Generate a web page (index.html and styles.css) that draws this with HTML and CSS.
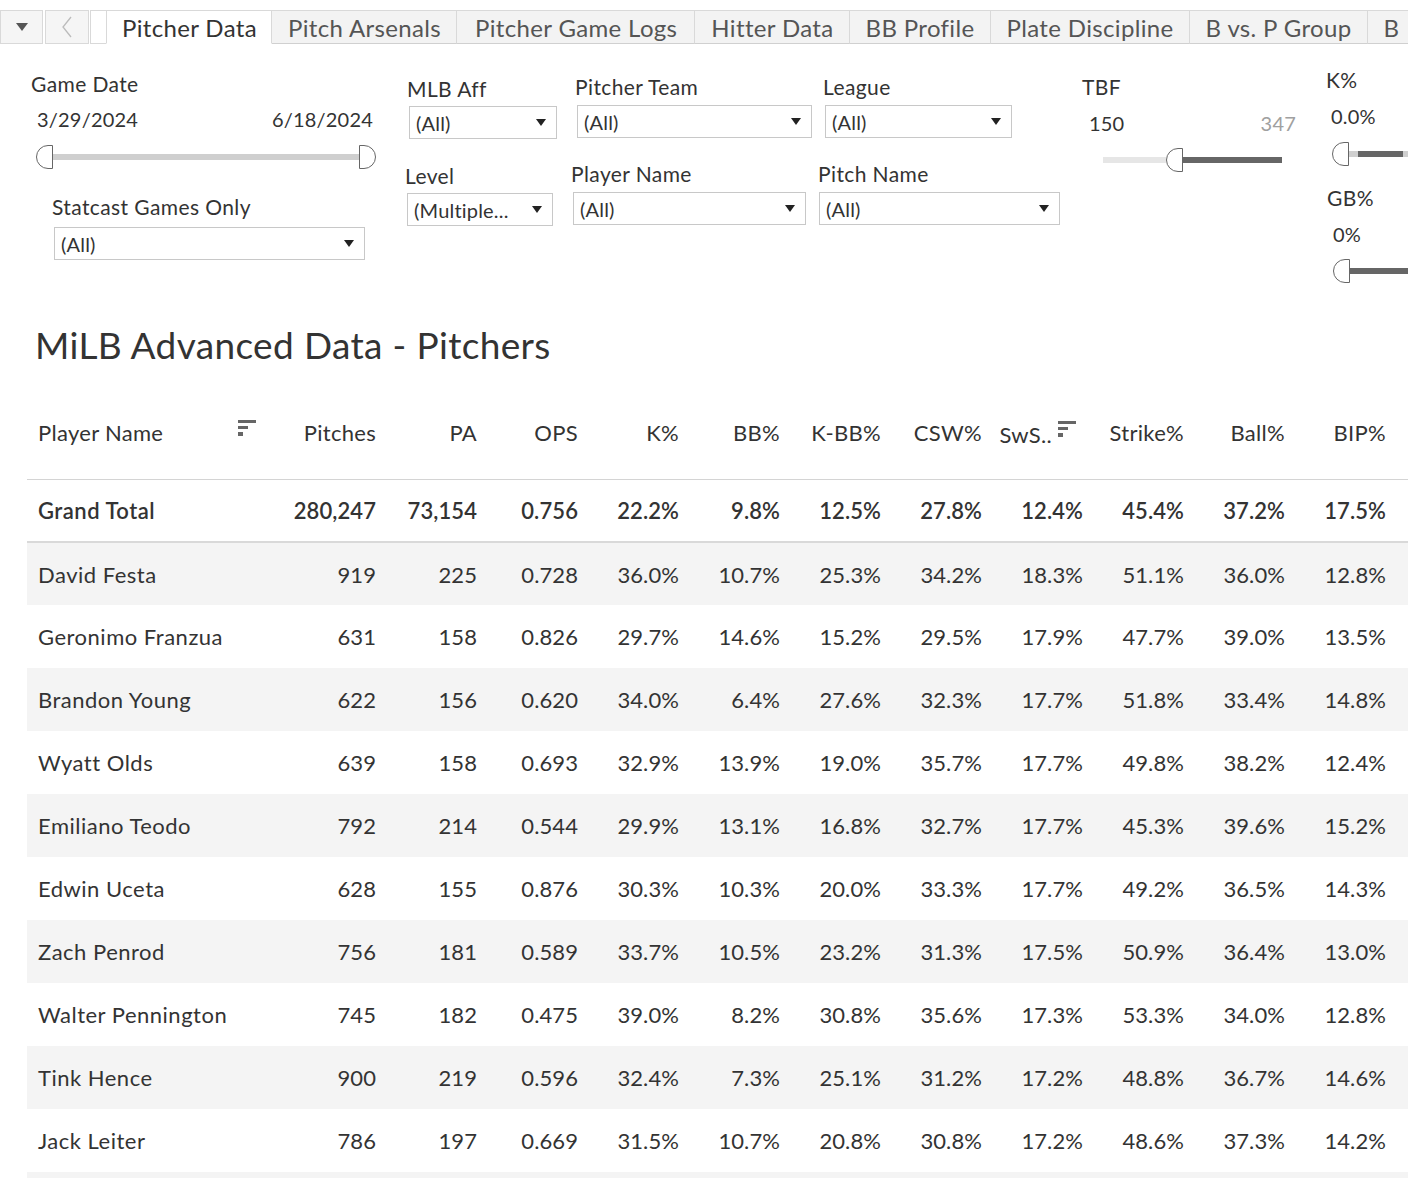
FILE: index.html
```html
<!DOCTYPE html>
<html>
<head>
<meta charset="utf-8">
<link rel="stylesheet" href="styles.css">
</head>
<body>
<div class="tabbar">
  <div class="tbtn menu"><svg width="12" height="8" viewBox="0 0 12 8"><path d="M0 0H12L6 8Z" fill="#555"/></svg></div>
  <div class="tbtn back"><svg width="12" height="22" viewBox="0 0 12 22"><path d="M10 1L2 11L10 21" fill="none" stroke="#bbb" stroke-width="1.3"/></svg></div>
  <div class="tgap"></div>
  <div class="tab active">Pitcher Data</div>
  <div class="tab">Pitch Arsenals</div>
  <div class="tab wide">Pitcher Game Logs</div>
  <div class="tab">Hitter Data</div>
  <div class="tab">BB Profile</div>
  <div class="tab">Plate Discipline</div>
  <div class="tab">B vs. P Group</div>
  <div class="tab last">B</div>
</div>

<div class="filters">
  <div class="col col-a">
    <div class="label">Game Date</div>
    <div class="range"><span>3/29/2024</span><span>6/18/2024</span></div>
    <div class="slider date-slider">
      <div class="handle hl"></div>
      <div class="track light"></div>
      <div class="handle hr"></div>
    </div>
    <div class="label statcast-label">Statcast Games Only</div>
    <div class="dd statcast-dd"><span>(All)</span><i class="arrow"></i></div>
  </div>
  <div class="col col-b">
    <div class="label mlb-label">MLB Aff</div>
    <div class="dd mlb-dd"><span>(All)</span><i class="arrow"></i></div>
    <div class="label level-label">Level</div>
    <div class="dd level-dd"><span>(Multiple...</span><i class="arrow"></i></div>
  </div>
  <div class="col col-c">
    <div class="label team-label">Pitcher Team</div>
    <div class="dd team-dd"><span>(All)</span><i class="arrow"></i></div>
    <div class="label player-label">Player Name</div>
    <div class="dd player-dd"><span>(All)</span><i class="arrow"></i></div>
  </div>
  <div class="col col-d">
    <div class="label league-label">League</div>
    <div class="dd league-dd"><span>(All)</span><i class="arrow"></i></div>
    <div class="label pitch-label">Pitch Name</div>
    <div class="dd pitch-dd"><span>(All)</span><i class="arrow"></i></div>
  </div>
  <div class="col col-e">
    <div class="label tbf-label">TBF</div>
    <div class="range tbf-range"><span>150</span><span class="muted">347</span></div>
    <div class="slider tbf-slider">
      <div class="track pale tbf-left"></div>
      <div class="handle hl"></div>
      <div class="track dark grow"></div>
    </div>
  </div>
  <div class="col col-f">
    <div class="label k-label">K%</div>
    <div class="val k-val">0.0%</div>
    <div class="slider k-slider">
      <div class="handle hl"></div>
      <div class="track light kseg1"></div>
      <div class="track dark kseg2"></div>
      <div class="track light grow"></div>
    </div>
    <div class="label gb-label">GB%</div>
    <div class="val gb-val">0%</div>
    <div class="slider gb-slider">
      <div class="handle hl"></div>
      <div class="track dark grow"></div>
    </div>
  </div>
</div>

<h1 class="title">MiLB Advanced Data - Pitchers</h1>

<div class="table-wrap">
<table class="data">
  <colgroup>
    <col class="c-name"><col class="c-num"><col class="c-num"><col class="c-num"><col class="c-num"><col class="c-num"><col class="c-num"><col class="c-num"><col class="c-num"><col class="c-num"><col class="c-num"><col class="c-num"><col class="c-extra">
  </colgroup>
  <thead>
    <tr>
      <th class="name-h"><div class="hflex"><span>Player Name</span><svg class="sort" width="18" height="16" viewBox="0 0 18 16"><rect x="0" y="0" width="18" height="3" fill="#666"/><rect x="0" y="6" width="10" height="3" fill="#666"/><rect x="0" y="12" width="5" height="4" fill="#666"/></svg></div></th>
      <th>Pitches</th><th>PA</th><th>OPS</th><th>K%</th><th>BB%</th><th>K-BB%</th><th>CSW%</th>
      <th class="sws-h"><span>SwS..</span><svg class="sort" width="18" height="16" viewBox="0 0 18 16"><rect x="0" y="0" width="18" height="3" fill="#666"/><rect x="0" y="6" width="10" height="3" fill="#666"/><rect x="0" y="12" width="5" height="4" fill="#666"/></svg></th>
      <th>Strike%</th><th>Ball%</th><th>BIP%</th><th></th>
    </tr>
  </thead>
  <tbody>
    <tr class="total"><td>Grand Total</td><td>280,247</td><td>73,154</td><td>0.756</td><td>22.2%</td><td>9.8%</td><td>12.5%</td><td>27.8%</td><td>12.4%</td><td>45.4%</td><td>37.2%</td><td>17.5%</td><td></td></tr>
    <tr class="alt"><td>David Festa</td><td>919</td><td>225</td><td>0.728</td><td>36.0%</td><td>10.7%</td><td>25.3%</td><td>34.2%</td><td>18.3%</td><td>51.1%</td><td>36.0%</td><td>12.8%</td><td></td></tr>
    <tr><td>Geronimo Franzua</td><td>631</td><td>158</td><td>0.826</td><td>29.7%</td><td>14.6%</td><td>15.2%</td><td>29.5%</td><td>17.9%</td><td>47.7%</td><td>39.0%</td><td>13.5%</td><td></td></tr>
    <tr class="alt"><td>Brandon Young</td><td>622</td><td>156</td><td>0.620</td><td>34.0%</td><td>6.4%</td><td>27.6%</td><td>32.3%</td><td>17.7%</td><td>51.8%</td><td>33.4%</td><td>14.8%</td><td></td></tr>
    <tr><td>Wyatt Olds</td><td>639</td><td>158</td><td>0.693</td><td>32.9%</td><td>13.9%</td><td>19.0%</td><td>35.7%</td><td>17.7%</td><td>49.8%</td><td>38.2%</td><td>12.4%</td><td></td></tr>
    <tr class="alt"><td>Emiliano Teodo</td><td>792</td><td>214</td><td>0.544</td><td>29.9%</td><td>13.1%</td><td>16.8%</td><td>32.7%</td><td>17.7%</td><td>45.3%</td><td>39.6%</td><td>15.2%</td><td></td></tr>
    <tr><td>Edwin Uceta</td><td>628</td><td>155</td><td>0.876</td><td>30.3%</td><td>10.3%</td><td>20.0%</td><td>33.3%</td><td>17.7%</td><td>49.2%</td><td>36.5%</td><td>14.3%</td><td></td></tr>
    <tr class="alt"><td>Zach Penrod</td><td>756</td><td>181</td><td>0.589</td><td>33.7%</td><td>10.5%</td><td>23.2%</td><td>31.3%</td><td>17.5%</td><td>50.9%</td><td>36.4%</td><td>13.0%</td><td></td></tr>
    <tr><td>Walter Pennington</td><td>745</td><td>182</td><td>0.475</td><td>39.0%</td><td>8.2%</td><td>30.8%</td><td>35.6%</td><td>17.3%</td><td>53.3%</td><td>34.0%</td><td>12.8%</td><td></td></tr>
    <tr class="alt"><td>Tink Hence</td><td>900</td><td>219</td><td>0.596</td><td>32.4%</td><td>7.3%</td><td>25.1%</td><td>31.2%</td><td>17.2%</td><td>48.8%</td><td>36.7%</td><td>14.6%</td><td></td></tr>
    <tr><td>Jack Leiter</td><td>786</td><td>197</td><td>0.669</td><td>31.5%</td><td>10.7%</td><td>20.8%</td><td>30.8%</td><td>17.2%</td><td>48.6%</td><td>37.3%</td><td>14.2%</td><td></td></tr>
    <tr class="alt"><td>&nbsp;</td><td></td><td></td><td></td><td></td><td></td><td></td><td></td><td></td><td></td><td></td><td></td><td></td></tr>
  </tbody>
</table>
</div>
</body>
</html>
```

FILE: styles.css
```css
* { box-sizing: border-box; }
html, body { margin: 0; padding: 0; background: #fff; }
body {
  width: 1408px;
  height: 1178px;
  overflow: hidden;
  font-family: Lato, "Open Sans", sans-serif;
  color: #333;
}

/* ---------- tab bar ---------- */
.tabbar {
  display: flex;
  margin-top: 10px;
  height: 34px;
  white-space: nowrap;
}
.tbtn {
  flex: none;
  height: 34px;
  background: #f5f5f5;
  border: 1px solid #d9d9d9;
  display: flex;
  align-items: center;
  justify-content: center;
}
.menu { width: 43px; margin-right: 2px; }
.back { width: 44px; margin-right: 1px; }
.tgap {
  flex: none;
  width: 16px;
  height: 34px;
  border: 1px solid #d9d9d9;
  border-right: none;
}
.tab {
  flex: none;
  height: 34px;
  padding: 0 15px 0 16px;
  display: flex;
  align-items: center;
  font-size: 24px;
  letter-spacing: 0.35px;
  color: #555;
  background: #f3f3f3;
  border-top: 1px solid #d9d9d9;
  border-bottom: 1px solid #d0d0d0;
  border-right: 1px solid #d9d9d9;
}
.tab.active {
  background: #fff;
  color: #333;
  border-left: 1px solid #d9d9d9;
  border-bottom: 1px solid #fff;
  padding: 0 14px 0 15px;
}
.tab.wide { padding: 0 17px 0 18px; }
.tab.last { padding-right: 30px; }

/* ---------- filters ---------- */
.filters {
  display: flex;
  align-items: flex-start;
  height: 256px;
}
.col { display: flex; flex-direction: column; flex: none; }
.label {
  font-size: 21px;
  line-height: 26px;
  letter-spacing: 0.4px;
  color: #333;
  white-space: nowrap;
}
.range, .val {
  font-size: 20px;
  line-height: 24px;
  color: #333;
  display: flex;
  justify-content: space-between;
  letter-spacing: 0.2px;
  white-space: nowrap;
}
.muted { color: #a0a0a0; }

.slider { display: flex; align-items: center; height: 24px; }
.handle {
  width: 17px;
  height: 24px;
  background: #fff;
  border: 1px solid #666;
  flex: none;
}
.hl { border-radius: 12px 0 0 12px; }
.hr { border-radius: 0 12px 12px 0; }
.track { height: 6px; }
.track.light { background: #cfcfcf; }
.track.pale { background: #e6e6e6; }
.track.dark { background: #666; }
.grow { flex: 1; }

.dd {
  height: 33px;
  border: 1px solid #c8c8c8;
  display: flex;
  align-items: center;
  justify-content: space-between;
  padding: 0 10px 0 6px;
  font-size: 20px;
  color: #333;
  letter-spacing: 0.2px;
  background: #fff;
  white-space: nowrap;
}
.arrow {
  width: 0; height: 0;
  border-left: 5px solid transparent;
  border-right: 5px solid transparent;
  border-top: 7px solid #222;
}

/* column A */
.col-a { width: 376px; padding-left: 31px; padding-top: 27px; }
.col-a .range { padding: 10px 3px 0 6px; }
.date-slider { margin-top: 14px; margin-left: 5px; }
.date-slider .track { flex: 1; }
.statcast-label { margin-top: 25px; margin-left: 21px; }
.statcast-dd { margin-top: 7px; margin-left: 23px; width: 311px; }

/* column B */
.col-b { width: 166px; margin-left: 29px; padding-top: 32px; }
.mlb-label { margin-left: 2px; }
.mlb-dd { margin-top: 4px; margin-left: 4px; width: 148px; }
.level-label { margin-top: 24px; }
.level-dd { margin-top: 4px; margin-left: 2px; width: 146px; }

/* column C */
.col-c { width: 247px; padding-top: 30px; }
.team-label { margin-left: 4px; }
.team-dd { margin-top: 5px; margin-left: 6px; width: 235px; }
.player-label { margin-top: 23px; }
.player-dd { margin-top: 5px; margin-left: 2px; width: 233px; }

/* column D */
.col-d { width: 264px; padding-top: 30px; }
.league-label { margin-left: 5px; }
.league-dd { margin-top: 5px; margin-left: 7px; width: 187px; }
.pitch-label { margin-top: 23px; }
.pitch-dd { margin-top: 5px; margin-left: 1px; width: 241px; }

/* column E */
.col-e { width: 244px; padding-top: 30px; }
.tbf-range { width: 214px; padding-left: 7px; margin-top: 11px; }
.tbf-slider { width: 179px; margin-left: 21px; margin-top: 13px; }
.tbf-left { width: 63px; }

/* column F */
.col-f { width: 82px; padding-top: 23px; }
.k-val { margin-left: 5px; margin-top: 11px; }
.k-slider { margin-left: 6px; margin-top: 14px; width: 100px; }
.kseg1 { width: 9px; }
.kseg2 { width: 45px; }
.gb-label { margin-left: 1px; margin-top: 19px; }
.gb-val { margin-left: 7px; margin-top: 11px; }
.gb-slider { margin-left: 7px; margin-top: 13px; width: 100px; }

/* ---------- title ---------- */
.title {
  margin: 0;
  padding: 23px 0 0 35px;
  font-weight: 400;
  font-size: 37px;
  line-height: 44px;
  letter-spacing: 0.35px;
  color: #333;
  height: 90px;
}

/* ---------- table ---------- */
.table-wrap { padding-left: 27px; }
.data {
  border-collapse: collapse;
  table-layout: fixed;
  width: 1403px;
  font-size: 22px;
  color: #333;
}
.c-name { width: 248px; }
.c-num { width: 101px; }
.c-extra { width: 44px; }
.data th {
  height: 89px;
  font-weight: 400;
  text-align: right;
  padding: 0 0 3px 0;
  white-space: nowrap;
  border-bottom: 1px solid #d4d4d4;
  letter-spacing: 0.3px;
}
.data th.name-h { text-align: left; padding-left: 11px; }
.hflex { display: flex; align-items: center; justify-content: space-between; padding-right: 19px; }
.sws-h { padding-right: 7px !important; }
.sws-h span { vertical-align: middle; }
.sws-h .sort { vertical-align: middle; margin-left: 6px; position: relative; top: -5px; }
.name-h .sort { position: relative; top: -5px; }
.data td {
  height: 63px;
  padding: 0;
  text-align: right;
  white-space: nowrap;
  letter-spacing: 0.1px;
}
.data td:first-child { text-align: left; padding-left: 11px; letter-spacing: 0.5px; }
.data tr.total td {
  height: 63px;
  font-weight: 600;
  color: #333;
  border-bottom: 2px solid #d9d9d9;
}
.data tr.alt td { background: #f4f4f4; }
```
